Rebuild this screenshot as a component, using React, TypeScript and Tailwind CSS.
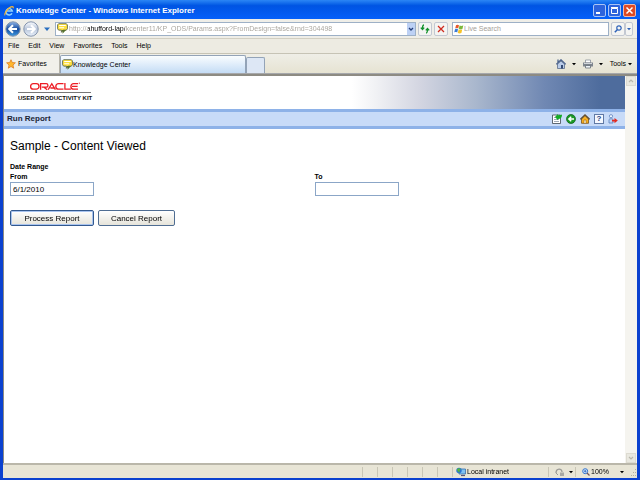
import { useState } from 'react';
import type { ReactNode } from 'react';

const MENUS = ['File', 'Edit', 'View', 'Favorites', 'Tools', 'Help'];

function Caret({ className = 'text-black' }: { className?: string }) {
  return (
    <svg className={`w-1 h-1 shrink-0 ${className}`} viewBox="0 0 4 4" fill="currentColor">
      <path d="M0 1h4L2 3.2z" />
    </svg>
  );
}

function IeLogo() {
  return (
    <svg className="w-2.5 h-2.5 shrink-0" viewBox="0 0 10 10" fill="none">
      <path d="M8 7.4A3.2 3.2 0 1 1 8.3 5H2.6" stroke="#8fd2ff" strokeWidth="1.5" />
      <path d="M1.200 9.300C-.2 8.500 3 2.500 7 .9c1.800-.7 2.600-.1 2 1.400" stroke="#f7b733" strokeWidth="1.200" />
    </svg>
  );
}

function BubbleIcon() {
  return (
    <svg className="w-[11px] h-[11px] shrink-0" viewBox="0 0 10 10">
      <path d="M1.500.6h7l1 1.200v3.400L8.500 6.500H5.500L4 8.500V6.500H1.500L.5 5.300V1.700z" fill="#ffe03c" stroke="#4c5a4c" strokeWidth=".7" />
      <path d="M2 2.300h6M2 4.300h4.500" stroke="#fff" strokeWidth="1" />
      <path d="M4 6.300h4.300L6.500 8.200 5 9.700V8z" fill="#56712c" />
    </svg>
  );
}

function NavArrow({ back }: { back?: boolean }) {
  return (
    <svg className="w-4 h-4" viewBox="0 0 16 16">
      <defs>
        <linearGradient id={back ? 'back' : 'fwd'} x1="0" y1="0" x2="0" y2="1">
          <stop offset="0" stopColor={back ? '#8eb4e8' : '#fafcff'} />
          <stop offset=".5" stopColor={back ? '#174c9f' : '#b9c6da'} />
          <stop offset="1" stopColor={back ? '#3d9ae0' : '#e9f1fb'} />
        </linearGradient>
      </defs>
      <circle cx="8" cy="8" r="7.200" fill={`url(#${back ? 'back' : 'fwd'})`} stroke="#8494ad" strokeWidth="1" />
      <path
        d={back ? 'M12 8H4.500M8 4.200 4.200 8 8 11.800' : 'M4 8h7.500M8 4.200 11.800 8 8 11.800'}
        fill="none"
        stroke="#fff"
        strokeWidth="2"
      />
    </svg>
  );
}

function ToolButton({ label, children }: { label: string; children: ReactNode }) {
  return (
    <button
      aria-label={label}
      className="h-3.5 w-[14px] shrink-0 flex items-center justify-center rounded-[2px] border border-[#c3c8d2] bg-[#f4f4f2]"
    >
      {children}
    </button>
  );
}

function TitleBar() {
  return (
    <header className="h-[19px] flex items-center pl-1 pr-1 pt-0.5 bg-linear-to-b from-[#2b86f5] via-[#0054e3] via-30% to-[#0560fa] text-white">
      <IeLogo />
      <h1 className="pl-0.5 flex-1 text-[8px] leading-[10px] font-bold whitespace-nowrap">
        Knowledge Center - Windows Internet Explorer
      </h1>
      <div className="flex gap-0.5">
        <button aria-label="Minimize" className="w-[13px] h-[13px] rounded-[2px] border border-[#a9c4f5] bg-[#2d63dc]">
          <svg viewBox="0 0 11 11"><path d="M2 8h4" stroke="#fff" strokeWidth="2" /></svg>
        </button>
        <button aria-label="Maximize" className="w-[13px] h-[13px] rounded-[2px] border border-[#a9c4f5] bg-[#2d63dc]">
          <svg viewBox="0 0 11 11"><path d="M2.500 3.500h6v5h-6zM2 2.500h7" fill="none" stroke="#fff" /></svg>
        </button>
        <button aria-label="Close" className="w-[13px] h-[13px] rounded-[2px] border border-[#f0b9a9] bg-[#dd4a25]">
          <svg viewBox="0 0 11 11"><path d="m2.500 2.500 6 6m0-6-6 6" stroke="#fff" strokeWidth="1.500" /></svg>
        </button>
      </div>
    </header>
  );
}

function AddressRow() {
  const [url, setUrl] = useState('http://ahufford-lap/kcenter11/KP_ODS/Params.aspx?FromDesign=false&rnd=304498');

  return (
    <div className="h-5 flex items-center pl-0.5 pr-1 bg-[#efeee8] border-b border-[#d2cfc2]">
      <button aria-label="Back"><NavArrow back /></button>
      <button aria-label="Forward" className="ml-0.5"><NavArrow /></button>
      <button aria-label="Recent pages" className="w-4 flex justify-center items-center">
        <svg className="w-1.5 h-1.5" viewBox="0 0 6 6"><path d="M0 1.500h6L3 5z" fill="#2a6fc0" /></svg>
      </button>
      <div className="flex-1 min-w-0 h-3.5 flex items-center pl-px bg-white border border-[#9db0c6]">
        <BubbleIcon />
        {/* host part of the address is darker than the rest */}
        <input
          aria-label="Address"
          value={url}
          onChange={(e) => setUrl(e.target.value)}
          className="flex-1 min-w-0 pl-px text-[7px] leading-[10px] outline-none text-transparent caret-black bg-clip-text bg-[linear-gradient(to_right,#a5a199_20px,#000_20px,#000_57px,#a5a199_57px)]"
        />
        <button aria-label="Show addresses" className="w-2 h-3 flex items-center justify-center bg-[#bdd1f5]">
          <svg className="w-1.5 h-1.5" viewBox="0 0 6 6" fill="none"><path d="m1 2 2 2 2-2" stroke="#26407c" strokeWidth="1.300" /></svg>
        </button>
      </div>
      <div className="flex gap-0.5 pl-0.5 pr-1">
        <ToolButton label="Refresh">
          <svg className="w-2.5 h-2.5" viewBox="0 0 10 10" fill="none" stroke="#15922d" strokeWidth="1.300">
            <path d="M4 1C2.500 1 2.500 2.500 2.500 5M.8 3.600l1.700 1.900 1.700-1.900M6 9c1.500 0 1.500-1.500 1.500-4M5.800 6.400l1.700-1.900 1.700 1.900" />
          </svg>
        </ToolButton>
        <ToolButton label="Stop">
          <svg className="w-2 h-2" viewBox="0 0 8 8"><path d="m1 1 6 6m0-6L1 7" stroke="#cf2c20" strokeWidth="1.300" /></svg>
        </ToolButton>
      </div>
      <div className="w-[25%] h-3.5 flex items-center pl-px bg-white border border-[#9db0c6]">
        <svg className="w-2.5 h-2.5 shrink-0" viewBox="0 0 10 10">
          <path d="M2 1.200c1-.8 2-.7 3 0L4.200 4.500c-1-.6-2-.6-3 0z" fill="#e8582a" />
          <path d="M5.500 1.500c1.200.6 2.300.6 3.800 0L8.400 5c-1.300.6-2.500.5-3.600 0z" fill="#7cb83c" />
          <path d="M1 5.200c1-.6 2-.6 3 0L3.200 8.500c-1-.6-2-.6-3 0z" fill="#3b7bd4" />
          <path d="M4.600 5.600c1.100.6 2.300.6 3.600 0L7.400 9c-1.300.6-2.500.5-3.600 0z" fill="#f7c325" />
        </svg>
        <input
          aria-label="Live Search"
          placeholder="Live Search"
          className="flex-1 min-w-0 text-[7px] leading-[10px] outline-none placeholder:text-[#a5a199]"
        />
      </div>
      <div className="pl-0.5 flex">
        <ToolButton label="Search">
          <svg className="w-2 h-2" viewBox="0 0 8 8" fill="none" stroke="#2e62b8" strokeWidth="1.200">
            <circle cx="5" cy="3" r="2.200" /><path d="M3.300 4.700.8 7.200" strokeWidth="1.500" />
          </svg>
        </ToolButton>
        <button aria-label="Search options" className="w-2 h-3.5 flex items-center justify-center rounded-[2px] border border-[#c3c8d2] bg-[#f4f4f2]">
          <Caret className="text-[#2e62b8]" />
        </button>
      </div>
    </div>
  );
}

function MenuBar() {
  return (
    <nav className="h-[15px] flex items-center gap-[9px] px-[5px] bg-[#edebe2] border-b border-[#c6c3b5]">
      {MENUS.map((menu) => (
        <button key={menu}>{menu}</button>
      ))}
    </nav>
  );
}

function TabRow() {
  return (
    <div className="h-5 flex items-end bg-linear-to-b from-[#efeee7] to-[#e6e3d2] border-b border-[#a6a8ab]">
      <button className="h-[19px] w-[57px] flex items-center gap-0.5 pl-[3px] bg-[#f1f0ea] border-r border-[#b6b4aa]">
        <svg className="w-2.5 h-2.5" viewBox="0 0 10 10">
          <path d="M5 .7 6.300 3.500l3.100.3L7 6l.7 3.200L5 7.500 2.300 9.200 3 6 .6 3.800l3.100-.3z" fill="#ffb72d" stroke="#d8741a" strokeWidth=".7" />
        </svg>
        Favorites
      </button>
      <button className="h-[18px] w-[186px] flex items-center pl-px rounded-t-[2px] border border-b-0 border-[#93a3b7] bg-linear-to-b from-[#fafdff] to-[#c4dcf5]">
        <BubbleIcon />
        Knowledge Center
      </button>
      <button aria-label="New tab" className="h-4 w-[19px] rounded-t-[2px] border border-b-0 border-[#93a3b7] bg-[#dde7f5]" />
      <div className="flex-1 h-full flex items-center justify-end gap-[7px] pr-[5px]">
        <button aria-label="Home" className="flex items-center gap-1.5">
          <svg className="w-2.5 h-2.5" viewBox="0 0 10 10">
            <path d="M1.500 5v4.500h7V5L5 2z" fill="#b9cbe8" stroke="#5b6d8c" strokeWidth=".8" />
            <path d="M.3 5.300 5 .8l4.700 4.500M2 .5v3" fill="none" stroke="#4c638d" strokeWidth="1.300" />
            <path d="M5 6h2v3.500H5z" fill="#344b75" />
          </svg>
          <Caret />
        </button>
        <button aria-label="Print" className="flex items-center gap-1.5">
          <svg className="w-2.5 h-2.5" viewBox="0 0 10 10">
            <path d="M2.500 1h5v3h-5z" fill="#fff" stroke="#7c8490" strokeWidth=".7" />
            <path d="M0 3.500h10v4H0z" fill="#7e858e" />
            <path d="M1 4.500h8" stroke="#d1d5da" />
            <path d="M2.500 6.500h5V9h-5z" fill="#eef3f8" stroke="#59616b" strokeWidth=".7" />
          </svg>
          <Caret />
        </button>
        <button className="flex items-center gap-0.5">Tools <Caret /></button>
      </div>
    </div>
  );
}

function ReportActions() {
  return (
    <div className="flex items-center gap-1">
      <button aria-label="Edit report">
        <svg className="w-2.5 h-2.5" viewBox="0 0 10 10">
          <path d="M.5 1h8v8.500h-8z" fill="#fff" stroke="#3d4650" strokeWidth=".8" />
          <path d="M2 3.500h2M2 5.500h5M2 7.500h5" stroke="#8794a3" strokeWidth=".8" />
          <path d="M3 3 6 0v1.300c2-.3 3.500-.3 4-.8 0 3.500-1.500 4.500-4 4.400v1.300z" fill="#14ac26" />
        </svg>
      </button>
      <button aria-label="Back to reports">
        <svg className="w-2.5 h-2.5" viewBox="0 0 10 10">
          <circle cx="5" cy="5" r="4.500" fill="#1c9a27" stroke="#0d5c17" strokeWidth=".7" />
          <path d="M8 5H3.500M5.200 2.700 2.800 5l2.400 2.300" fill="none" stroke="#fff" strokeWidth="1.400" />
        </svg>
      </button>
      <button aria-label="Home page">
        <svg className="w-2.5 h-2.5" viewBox="0 0 10 10">
          <path d="M1.500 5v4.300h7V5L5 1.700z" fill="#f9b020" stroke="#6a4310" strokeWidth=".7" />
          <path d="M.4 5.300 5 .9l4.600 4.400" fill="none" stroke="#5f4a2b" strokeWidth="1.200" />
          <path d="M4 6h2v3.500H4z" fill="#fff4d0" stroke="#80500f" strokeWidth=".5" />
        </svg>
      </button>
      <button aria-label="Help" className="w-2.5 h-2.5 flex items-center justify-center border border-[#6179a5] bg-[#f5f8ff] text-[#1e3e82] text-[8px] leading-[8px] font-bold">
        ?
      </button>
      <button aria-label="Log out">
        <svg className="w-2.5 h-2.5" viewBox="0 0 10 10">
          <circle cx="3" cy="2.200" r="1.600" fill="#f3f8ff" stroke="#5b80bd" strokeWidth=".8" />
          <path d="M1 9V5.500c0-1 4-1 4 0V9z" fill="#b9d2f5" stroke="#5b80bd" strokeWidth=".8" />
          <path d="M4 5.700h2.500V4L9.800 6.600 6.500 9.200V7.500H4z" fill="#e22b22" />
        </svg>
      </button>
    </div>
  );
}

function ReportPage() {
  const [from, setFrom] = useState('6/1/2010');
  const [to, setTo] = useState('');

  return (
    <main className="flex-1 min-w-0 bg-white">
      {/* brand banner */}
      <div className="h-[33px] flex bg-[linear-gradient(to_right,#fff_56%,#f0f1f4_60%,#d3d5e1_67%,#a9b7cd_76%,#7088b3_87%,#4e6c9d_96%)]">
        <div className="pl-3.5 pt-1.5">
          <svg className="w-[78px] h-[21px]" viewBox="0 0 78 21" role="img" aria-label="Oracle User Productivity Kit">
            <g fill="none" stroke="#ed1c24" strokeWidth="1.300">
              <rect x="12.600" y="1.700" width="8.400" height="5.400" rx="2.700" />
              <path d="M22.600 7.700V1.700h5.600a1.700 1.700 0 0 1 0 3.500h-4.400M26 5.200l3.200 2.500" />
              <path d="m30.200 7.700 3.600-6L37.400 7.700M32.400 6h3.600" />
              <path d="M45.500 1.700h-5a2.700 2.700 0 0 0 0 5.400h5" />
              <path d="M46.900 1v6.100h6" />
              <path d="M60 1.700h-4.400a2.700 2.700 0 0 0 0 5.400H60M54 4.400h5.600" />
            </g>
            <circle cx="61.300" cy="1.200" r=".6" fill="#ed1c24" />
            <path d="M0 10.500h73" stroke="#777" />
            <text x="0" y="18" fontSize="6" fontWeight="700" fill="#111" fontFamily="Liberation Sans, Arial, sans-serif">
              USER PRODUCTIVITY KIT
            </text>
          </svg>
        </div>
      </div>

      <div className="h-5 flex items-center justify-between pl-[3px] pr-[7px] bg-[#c8dbf8] border-y-3 border-[#8eb2e8]">
        <h2 className="text-[8px] leading-[10px] font-bold text-[#1b2636]">Run Report</h2>
        <ReportActions />
      </div>

      <div className="px-1.5 pt-2.5 text-[8px] leading-[10px]">
        <h3 className="text-[12px] leading-[14px] text-black">Sample - Content Viewed</h3>
        <form onSubmit={(e) => e.preventDefault()}>
          <p className="pt-[9px] text-[7px] font-bold">Date Range</p>
          <div className="flex">
            <div className="w-[50%] flex flex-col items-start">
              <label htmlFor="from" className="text-[7px] font-bold">From</label>
              <input
                id="from"
                autoFocus
                value={from}
                onChange={(e) => setFrom(e.target.value)}
                onFocus={(e) => e.target.setSelectionRange(from.length, from.length)}
                className="w-[84px] h-3.5 px-0.5 border border-[#8ba6c7] outline-none"
              />
            </div>
            <div className="flex flex-col items-start">
              <label htmlFor="to" className="text-[7px] font-bold">To</label>
              <input
                id="to"
                value={to}
                onChange={(e) => setTo(e.target.value)}
                className="w-[84px] h-3.5 px-0.5 border border-[#8ba6c7] outline-none"
              />
            </div>
          </div>
          <div className="flex gap-1 pt-3.5">
            <button
              type="submit"
              className="w-[84px] h-4 pt-px rounded-[2px] border border-[#33598f] bg-linear-to-b from-white to-[#e6e4da] shadow-[inset_0_0_0_1px_#a9c4ef]"
            >
              Process Report
            </button>
            <button
              type="button"
              className="w-[77px] h-4 pt-px rounded-[2px] border border-[#4f6d92] bg-linear-to-b from-white to-[#e6e4da]"
            >
              Cancel Report
            </button>
          </div>
        </form>
      </div>
    </main>
  );
}

function ScrollBar() {
  return (
    <div className="w-3 px-px flex flex-col justify-between bg-[#f5f4ef]">
      <button aria-label="Scroll up" className="h-2.5 flex items-center justify-center bg-[#e9e8e0] border border-[#dddbd1]">
        <svg className="w-1.5 h-1.5" viewBox="0 0 6 6" fill="none"><path d="m1 4 2-2 2 2" stroke="#b9b7ac" strokeWidth="1.200" /></svg>
      </button>
      <button aria-label="Scroll down" className="h-2.5 flex items-center justify-center bg-[#e9e8e0] border border-[#dddbd1]">
        <svg className="w-1.5 h-1.5" viewBox="0 0 6 6" fill="none"><path d="m1 2 2 2 2-2" stroke="#b9b7ac" strokeWidth="1.200" /></svg>
      </button>
    </div>
  );
}

function StatusBar() {
  return (
    <footer className="h-[15px] flex items-center justify-end bg-[#e8e5d6] border-t-2 border-[#bab7aa]">
      {[0, 1, 2, 3, 4, 5].map((pane) => (
        <div key={pane} className="w-[15px] h-2.5 border-l border-[#c9c6b6]" />
      ))}
      <div className="w-24 h-2.5 flex items-center gap-px pl-[3px] border-l border-[#c9c6b6]">
        <svg className="w-2.5 h-2.5" viewBox="0 0 10 10">
          <path d="M3 2h6.500v5H3z" fill="#7fc1f2" stroke="#3a6fa8" strokeWidth=".8" />
          <path d="M5 8.500h4" stroke="#557" strokeWidth="1.200" />
          <circle cx="3" cy="3.500" r="2.700" fill="#2873d4" />
          <path d="M1 2.500C2 .8 4 1 4.500 2S3 3.500 3.500 5 1 4.500 1 2.500z" fill="#54b63e" />
        </svg>
        Local intranet
      </div>
      <button aria-label="Protected mode" className="w-[27px] h-2.5 flex items-center gap-1 pl-1.5 border-l border-[#c9c6b6]">
        <svg className="w-2.5 h-2.5 shrink-0" viewBox="0 0 10 10" fill="none">
          <path d="M1 6c0-5 6-5 6-1" stroke="#9b9b96" strokeWidth="1.300" />
          <path d="M5 5.500h4V9H5z" fill="#a9a9a3" />
          <path d="m1 6 2 2" stroke="#9b9b96" />
        </svg>
        <Caret />
      </button>
      <button className="w-[49px] h-2.5 flex items-center pl-1.5 border-l border-[#c9c6b6]">
        <svg className="w-2 h-2 mr-px shrink-0" viewBox="0 0 8 8" fill="none">
          <circle cx="3.200" cy="3.200" r="2.500" fill="#e5f1ff" stroke="#3473cc" />
          <path d="M3.200 1.800v2.800M1.800 3.200h2.800" stroke="#1659bd" strokeWidth=".8" />
          <path d="m5 5 2.500 2.500" stroke="#755" strokeWidth="1.300" />
        </svg>
        <span className="flex-1 text-left">100%</span>
        <Caret />
      </button>
      <svg className="w-[13px] h-2.5" viewBox="0 0 13 10" fill="#b3b09f">
        <path d="M11 2h1v1h-1zM9 5h1v1H9zM11 5h1v1h-1zM7 8h1v1H7zM9 8h1v1H9zM11 8h1v1h-1z" />
      </svg>
    </footer>
  );
}

export default function App() {
  return (
    <div className="min-h-screen flex flex-col bg-[#0b41cf] text-black text-[7px] leading-[10px] font-['Liberation_Sans',Arial,sans-serif]">
      <TitleBar />
      <div className="flex-1 flex flex-col mx-[3px] mb-0.5">
        <AddressRow />
        <MenuBar />
        <TabRow />
        <div className="flex-1 flex border-t-2 border-l border-[#8d8b83]">
          <ReportPage />
          <ScrollBar />
        </div>
        <StatusBar />
      </div>
    </div>
  );
}
